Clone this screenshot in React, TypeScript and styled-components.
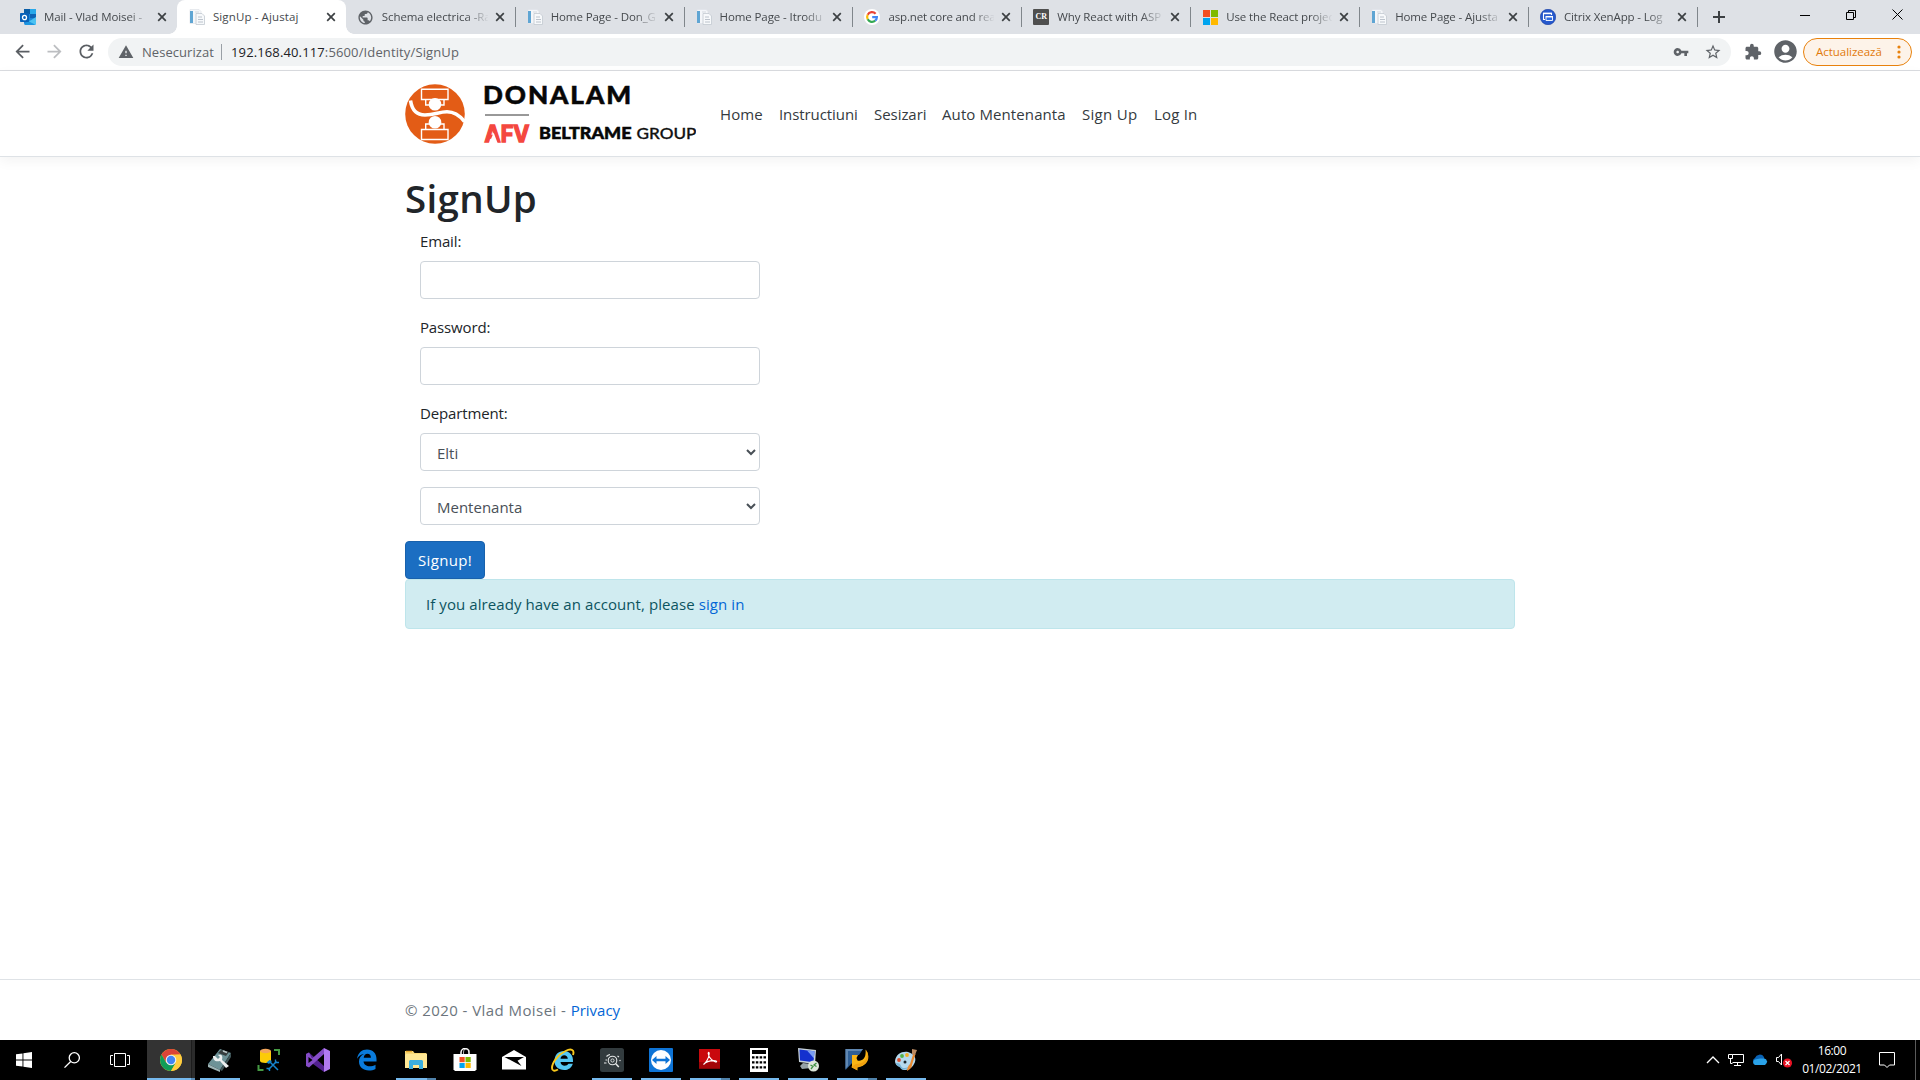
import React from "react";
import styled, { createGlobalStyle } from "styled-components";
import {
  MdArrowBack,
  MdArrowForward,
  MdRefresh,
  MdWarning,
  MdVpnKey,
  MdStarBorder,
  MdExtension,
  MdAccountCircle,
  MdPublic,
} from "react-icons/md";

const GlobalStyle = createGlobalStyle`
  * { box-sizing: border-box; }
  html, body { margin: 0; padding: 0; background: #fff; overflow: hidden; }
  body { font-family: "Segoe UI", "Open Sans", "Noto Sans", sans-serif; font-size: 15px; line-height: 24px; color: #212529; }
  svg { display: block; flex: none; }
`;

const Screen = styled.div`
  width: 1920px;
  height: 1080px;
  display: flex;
  flex-direction: column;
`;

/* ---------- browser chrome ---------- */

const TabStrip = styled.div`
  height: 34px;
  flex: none;
  display: flex;
  padding-left: 8px;
  background: #dee1e6;
`;

const TabBox = styled.div<{ $active?: boolean; $divider?: boolean }>`
  position: relative;
  width: 168.9px;
  height: 34px;
  flex: none;
  display: flex;
  align-items: center;
  padding: 0 6px 0 12px;
  background: ${(p) => (p.$active ? "#fff" : "transparent")};
  border-radius: 8px 8px 0 0;
  ${(p) =>
    p.$active &&
    `
    &::before, &::after {
      content: "";
      position: absolute;
      bottom: 0;
      width: 8px;
      height: 8px;
    }
    &::before { left: -8px; background: radial-gradient(circle at 0 0, transparent 7.5px, #fff 8px); }
    &::after { right: -8px; background: radial-gradient(circle at 100% 0, transparent 7.5px, #fff 8px); }
  `}
  ${(p) =>
    p.$divider &&
    `
    &::after {
      content: "";
      position: absolute;
      right: -1px;
      top: 7px;
      width: 1px;
      height: 20px;
      background: #80868b;
    }
  `}
`;

const TabTitle = styled.span<{ $ls: number; $fade: boolean }>`
  width: 106px;
  flex: none;
  margin-left: 8px;
  overflow: hidden;
  white-space: nowrap;
  font-size: 11.5px;
  line-height: 18px;
  color: #45494d;
  letter-spacing: ${(p) => p.$ls}px;
  ${(p) => p.$fade && "mask-image: linear-gradient(90deg, #000 84px, transparent 107px);"}
`;

const TabClose = styled.svg`
  margin-left: auto;
`;

const NewTab = styled.div`
  width: 44px;
  display: flex;
  align-items: center;
  justify-content: center;
`;

const WindowButtons = styled.div`
  margin-left: auto;
  display: flex;
  height: 29px;
`;

const WindowButton = styled.div`
  width: 46px;
  display: flex;
  align-items: center;
  justify-content: center;
`;

const Toolbar = styled.div`
  height: 37px;
  flex: none;
  display: flex;
  align-items: center;
  padding: 0 8px 1px 12px;
  border-bottom: 1px solid #dadce0;
  color: #5f6368;
`;

const NavIcon = styled.div<{ $dim?: boolean }>`
  width: 20px;
  margin-right: 12px;
  display: flex;
  justify-content: center;
  color: ${(p) => (p.$dim ? "#bcbec1" : "#5a5e63")};
`;

const Omnibox = styled.div`
  width: 1623px;
  height: 28px;
  display: flex;
  align-items: center;
  padding: 0 9px 0 10px;
  border-radius: 14px;
  background: #f1f3f4;
  font-size: 13px;
`;

const Insecure = styled.span`
  margin-left: 8px;
  width: 79px;
  color: #5f6368;
  letter-spacing: 0.05px;
`;

const OmniDivider = styled.span`
  width: 1px;
  height: 16px;
  background: #9aa0a6;
`;

const Url = styled.span`
  margin-left: 9px;
  color: #5f6368;
  letter-spacing: 0.13px;
  b {
    font-weight: 400;
    color: #202124;
  }
`;

const OmniActions = styled.div`
  margin-left: auto;
  display: flex;
  align-items: center;
  gap: 15px;
`;

const ToolbarActions = styled.div`
  margin-left: 13px;
  display: flex;
  align-items: center;
  gap: 10px;
`;

const UpdatePill = styled.div`
  width: 109px;
  height: 28px;
  margin-left: auto;
  padding: 0 10px 0 12px;
  display: flex;
  align-items: center;
  justify-content: space-between;
  border: 1px solid #e8810c;
  border-radius: 14px;
  background: #fdf3e9;
  color: #e27a0b;
  font-size: 11.5px;
  letter-spacing: -0.03px;
`;

/* ---------- web page ---------- */

const Header = styled.header`
  height: 86px;
  flex: none;
  border-bottom: 1px solid #dee2e6;
  box-shadow: 0 4px 12px rgba(0, 0, 0, 0.05);
  background: #fff;
`;

const Container = styled.div`
  width: 1140px;
  margin: 0 auto;
  padding: 0 15px;
`;

const HeaderRow = styled(Container)`
  height: 85px;
  display: flex;
  align-items: center;
`;

const Nav = styled.nav`
  display: flex;
  margin-left: 24px;
`;

const NavLink = styled.a<{ $w: number; $ls: number }>`
  width: ${(p) => p.$w}px;
  white-space: nowrap;
  color: #343a40;
  letter-spacing: ${(p) => p.$ls}px;
`;

const Main = styled(Container).attrs({ as: "main" })`
  flex: 1;
  padding-top: 16px;
`;

const Title = styled.h1`
  margin: 0;
  padding-top: 1px;
  height: 56px;
  font-size: 38.5px;
  font-weight: 600;
  line-height: 48px;
  letter-spacing: 0.3px;
`;

const Fields = styled.div`
  width: 340px;
  margin-left: 15px;
`;

const Field = styled.div`
  margin-bottom: 16px;
`;

const Label = styled.label`
  display: block;
  margin-bottom: 8px;
  height: 24px;
  letter-spacing: -0.15px;
`;

const Input = styled.input`
  display: block;
  width: 100%;
  height: 38px;
  border: 1px solid #ced4da;
  border-radius: 4px;
  background: #fff;
`;

const Select = styled.select`
  display: block;
  width: 100%;
  height: 38px;
  padding: 7px 12px 5px;
  border: 1px solid #ced4da;
  border-radius: 4px;
  background: #fff;
  color: #495057;
  font: inherit;
`;

const Submit = styled.button`
  display: block;
  width: 80px;
  height: 38px;
  padding: 0;
  border: 1px solid #1861ac;
  border-radius: 4px;
  background: #1b6ec2;
  color: #fff;
  font: inherit;
  letter-spacing: 0.3px;
`;

const Alert = styled.div`
  height: 50px;
  padding: 12px 20px;
  border: 1px solid #bee5eb;
  border-radius: 4px;
  background: #d1ecf1;
  color: #0c5460;
  letter-spacing: 0.08px;
`;

const Link = styled.a`
  color: #0366d6;
`;

const Footer = styled.footer`
  height: 61px;
  flex: none;
  border-top: 1px solid #dee2e6;
  line-height: 60px;
  color: #6c757d;
`;

const Copyright = styled.span`
  letter-spacing: 0.43px;
`;

/* ---------- taskbar ---------- */

const Taskbar = styled.div`
  height: 40px;
  flex: none;
  display: flex;
  background: #000;
  color: #fff;
`;

const SystemButton = styled.div<{ $w?: number; $shift?: number }>`
  width: ${(p) => p.$w ?? 48}px;
  padding-right: ${(p) => p.$shift ?? 0}px;
  display: flex;
  align-items: center;
  justify-content: center;
`;

const AppButton = styled.div<{ $state: "idle" | "open" | "stack" | "active" }>`
  position: relative;
  width: 49px;
  height: 40px;
  padding-right: 2px;
  display: flex;
  align-items: center;
  justify-content: center;
  background: ${(p) =>
    p.$state === "active"
      ? "linear-gradient(90deg, #333 44px, #1c1c1c 44px, #1c1c1c 45px, #2b2b2b 45px, #2b2b2b 48px, #000 48px)"
      : "none"};
  &::after {
    content: "";
    position: absolute;
    bottom: 0;
    height: 2px;
    left: ${(p) => (p.$state === "active" ? 0 : 4)}px;
    width: ${(p) => (p.$state === "active" ? 48 : 40)}px;
    background: ${(p) =>
      p.$state === "idle"
        ? "none"
        : p.$state === "open"
          ? "#76b9ed"
          : p.$state === "active"
            ? "linear-gradient(90deg, #76b9ed 44px, #5a8db8 44px)"
            : "linear-gradient(90deg, #76b9ed 31px, #5082aa 31px)"};
  }
`;

const Tray = styled.div`
  margin-left: auto;
  display: flex;
  align-items: center;
`;

const TrayIcons = styled.div`
  display: flex;
  align-items: center;
  gap: 8px;
`;

const Clock = styled.div`
  width: 78px;
  text-align: center;
  font-size: 12px;
  line-height: 18px;
  letter-spacing: -0.4px;
`;

const ShowDesktop = styled.div`
  width: 5px;
  height: 40px;
  border-left: 1px solid #5a5a5a;
`;

/* ---------- favicons ---------- */

const OutlookIcon = () => (
  <svg width="16" height="16" viewBox="0 0 16 16">
    <rect x="4" y="0" width="12" height="15" rx="0.8" fill="#1a86d9" />
    <path d="M4 0h6v5H4z" fill="#0a5ea8" />
    <path d="M10 0h6v5h-6z" fill="#28a8ea" />
    <path d="M10 5h6v4h-6z" fill="#0e64b5" />
    <path d="M4 16h11.500L10 10z" fill="#1c96e0" />
    <path d="M16 8v8l-7-3.500z" fill="#4cc2f1" />
    <rect x="0" y="4" width="9" height="9" rx="0.800" fill="#0b62b8" />
    <ellipse cx="4.500" cy="8.500" rx="2" ry="2.200" fill="none" stroke="#fff" strokeWidth="1.300" />
  </svg>
);

const PageIcon = () => (
  <svg width="16" height="16" viewBox="0 0 16 16">
    <path d="M1 0.500h9l2 2v12H1z" fill="#f4f6f9" stroke="#dfe3e8" strokeWidth="0.700" />
    <rect x="1" y="2" width="3" height="12" fill="#5fa5d3" />
    <path d="M7 4.500h6l2.500 2.500v8.500H7z" fill="#f7f9fb" stroke="#c3c9d1" strokeWidth="0.800" />
    <path d="M9 8h4M9 10.500h5M9 13h5" stroke="#bcc3cc" />
    <path d="M6 3h4" stroke="#d4d9df" />
  </svg>
);

const GoogleIcon = () => (
  <svg width="16" height="16" viewBox="0 0 16 16">
    <circle cx="8" cy="8" r="8" fill="#fff" />
    <g fill="none" strokeWidth="2.200">
      <path d="M11.600 4.700A4.900 4.900 0 0 0 3.700 5.700" stroke="#ea4335" />
      <path d="M3.700 5.700A4.900 4.900 0 0 0 3.700 10.300" stroke="#fbbc05" />
      <path d="M3.700 10.300A4.900 4.900 0 0 0 11.200 11.700" stroke="#34a853" />
      <path d="M11.200 11.700A4.900 4.900 0 0 0 12.900 8.200H8.200" stroke="#4285f4" />
    </g>
  </svg>
);

const CrBadge = styled.span`
  width: 16px;
  height: 16px;
  border-radius: 1px;
  background: #4f4f4f;
  color: #fff;
  font: 700 8px/16px "Liberation Serif", serif;
  text-align: center;
`;

const FourSquares = ({ size }: { size: number }) => (
  <svg width={size} height={size} viewBox="0 0 15 15">
    <path d="M0 0h7v7H0z" fill="#f25022" />
    <path d="M8 0h7v7H8z" fill="#7fba00" />
    <path d="M0 8h7v7H0z" fill="#00a4ef" />
    <path d="M8 8h7v7H8z" fill="#ffb900" />
  </svg>
);

const CitrixIcon = () => (
  <svg width="16" height="16" viewBox="0 0 16 16">
    <circle cx="8" cy="8" r="7.700" fill="#2659cd" stroke="#153b9d" strokeWidth="0.600" />
    <path d="M5 10.500H3.500V4.500h8v1.500" fill="none" stroke="#fff" strokeWidth="1.100" />
    <path d="M3 4.400h9" stroke="#fff" strokeWidth="1.600" />
    <path d="M6 7.500h6.500v4H6z" fill="#2f6bdf" stroke="#fff" strokeWidth="0.900" />
    <path d="M5.600 7.700h7.300" stroke="#fff" strokeWidth="1.500" />
  </svg>
);

type Tab = { title: string; icon: React.ReactNode; ls?: number; fade?: boolean };

const tabs: Tab[] = [
  { title: "Mail - Vlad Moisei -", icon: <OutlookIcon />, fade: true },
  { title: "SignUp - Ajustaj", icon: <PageIcon />, ls: 0.12 },
  { title: "Schema electrica -Ra", icon: <MdPublic size={17} color="#5f6368" />, ls: -0.08, fade: true },
  { title: "Home Page - Don_G", icon: <PageIcon />, fade: true },
  { title: "Home Page - Itrodu", icon: <PageIcon />, fade: true },
  { title: "asp.net core and rea", icon: <GoogleIcon />, ls: -0.15, fade: true },
  { title: "Why React with ASP", icon: <CrBadge>CR</CrBadge>, fade: true },
  { title: "Use the React projec", icon: <FourSquares size={15} />, ls: -0.12, fade: true },
  { title: "Home Page - Ajusta", icon: <PageIcon />, fade: true },
  { title: "Citrix XenApp - Log", icon: <CitrixIcon />, ls: -0.15, fade: true },
];

const IconSlot = styled.span`
  width: 16px;
  display: flex;
  justify-content: center;
`;

/* ---------- site logo ---------- */

const SiteLogo = () => (
  <svg width="291" height="62" viewBox="0 0 291 62">
    <circle cx="30" cy="31" r="29.800" fill="#e35c16" />
    <g fill="none" stroke="#fff" strokeWidth="1.400">
      <path d="M16.500 6.300h26.500v10.200h-26.500zM16.500 46.500h26.500v10h-26.500z" />
      <path d="M20.700 16.500v5.500h4M39 16.500v5.500h-4M20.700 46.500V41h4M39 46.500V41h-4" />
    </g>
    <circle cx="30" cy="21.300" r="6.300" fill="#fff" />
    <circle cx="30" cy="39.300" r="6.300" fill="#fff" />
    <path d="M5.500 17.500C7 27 11 32 20 32C30 32 34 28.800 42 28.800C50 28.800 55 33 59.500 38.500" fill="none" stroke="#fff" strokeWidth="3.600" />
    <text x="78" y="21" fontFamily="Lato" fontWeight="900" fontSize="24.500" letterSpacing="1.800" textLength="150" lengthAdjust="spacingAndGlyphs" fill="#070707" stroke="#070707" strokeWidth="0.500">DONALAM</text>
    <path d="M80 32h44" stroke="#333" strokeWidth="1" />
    <text transform="translate(79.500 59)" fontFamily="Inter" fontWeight="700" fontSize="23" textLength="45" lengthAdjust="spacingAndGlyphs" fill="#f4473f" stroke="#f4473f" strokeWidth="1.400">AFV</text>
    <path d="M84.300 60.500L88.600 49.500L92.800 60.500z" fill="#fff" />
    <text x="134" y="56" fontFamily="Lato" fontWeight="900" fontSize="16" textLength="92.500" lengthAdjust="spacingAndGlyphs" fill="#070707" stroke="#070707" strokeWidth="0.500">BELTRAME</text>
    <text x="231.500" y="56" fontFamily="Lato" fontWeight="500" fontSize="16" textLength="60" lengthAdjust="spacingAndGlyphs" fill="#111" stroke="#111" strokeWidth="0.300">GROUP</text>
  </svg>
);

const navLinks = [
  { text: "Home", w: 59, ls: 0.1 },
  { text: "Instructiuni", w: 95, ls: -0.08 },
  { text: "Sesizari", w: 68, ls: -0.05 },
  { text: "Auto Mentenanta", w: 140, ls: 0.1 },
  { text: "Sign Up", w: 72, ls: 0.3 },
  { text: "Log In", w: 50, ls: 0.2 },
];

/* ---------- taskbar icons ---------- */

const StartIcon = () => (
  <svg width="16" height="16" viewBox="0 0 16 16" fill="#fff">
    <path d="M0 2.300L6.500 1.400V7.500H0zM7.400 1.200L16 0v7.500H7.400zM0 8.500h6.500v6.100L0 13.700zM7.400 8.500H16V16l-8.600-1.200z" />
  </svg>
);
const SearchIcon = () => (
  <svg width="16" height="16" viewBox="0 0 16 16" fill="none" stroke="#fff" strokeWidth="1.300">
    <circle cx="10.300" cy="5.800" r="5.100" />
    <path d="M6.700 9.500L0.500 15.600" />
  </svg>
);
const TaskViewIcon = () => (
  <svg width="20" height="16" viewBox="0 0 20 16" fill="none" stroke="#fff">
    <path d="M4.500 1.500h11v13h-11zM3 3.500H0.500v9H3M17 3.500h2.500v9H17" />
  </svg>
);
const ChromeIcon = () => (
  <svg width="24" height="24" viewBox="0 0 24 24">
    <circle cx="12" cy="12" r="11" fill="#fbc82f" />
    <path d="M2.500 6.500A11 11 0 0 1 21.500 6.500H12L7.200 14.700z" fill="#db4437" />
    <path d="M2.500 6.500A11 11 0 0 0 12 23L16.800 14.700H7.200z" fill="#0f9d58" />
    <path d="M21.500 6.500A11 11 0 0 1 12 23L16.800 14.700L16 7z" fill="#ffcd40" />
    <circle cx="12" cy="12" r="5.300" fill="#f1f1f1" />
    <circle cx="12" cy="12" r="4.200" fill="#4285f4" />
  </svg>
);
const ToolIcon = () => (
  <svg width="26" height="24" viewBox="0 0 26 24">
    <path d="M1 16L13 1l11 4-11 17z" fill="#6d9297" />
    <path d="M1 16l12 6v2L1 19z" fill="#9db4b6" />
    <path d="M13 22L24 5v4L15 23z" fill="#3f5558" />
    <path d="M14 2l8 2-3 4-8-3z" fill="#353d3e" />
    <path d="M16 3l4 1.500" stroke="#bdc8c8" strokeWidth="1.500" />
    <path d="M8 8l3 3 2-2-2-2c4-1 5 1 4 5l7 6-3 2-6-7c-5 1-7-1-7-5z" fill="#edf0f0" />
  </svg>
);
const DatabaseIcon = () => (
  <svg width="24" height="24" viewBox="0 0 24 24">
    <path d="M3 3v10c0 2.500 11 2.500 11 0V3z" fill="#fccb08" />
    <ellipse cx="8.500" cy="3" rx="5.500" ry="2.200" fill="#f3a65b" />
    <path d="M17 2h5v5M1.500 17v5h5" fill="none" stroke="#459a43" strokeWidth="2" />
    <path d="M12 13l9 9M19.500 13.500l-8 8" stroke="#1584cf" strokeWidth="1.500" />
    <path d="M9.500 14.500l3-2.500 2.500 1-3 3z" fill="#1584cf" />
    <path d="M18.500 11.500v3h3.500M9.500 20.500h3v2.500" fill="none" stroke="#1584cf" strokeWidth="1.400" />
  </svg>
);
const StudioIcon = () => (
  <svg width="24" height="24" viewBox="0 0 24 24">
    <path d="M0 6l3-1.500L18 18v6L3 13 0 17z" fill="#52218f" />
    <path d="M0 6v12l3 1.500L18 6V0L6 10.500 3 4.500z" fill="#854cc7" />
    <path d="M2.500 9v6l4-3z" fill="#000" />
    <path d="M12.500 12L18 7.500v9z" fill="#000" />
    <path d="M18 0l6 3v18l-6 3z" fill="#b179f1" />
  </svg>
);
const EdgeIcon = () => (
  <svg width="22" height="22" viewBox="0 0 22 22">
    <path d="M1 9.800C2 3.700 6 0.500 11 0.500C17 0.500 20.500 4.600 20.500 10v2.500H7.500c.3 3.200 3.200 4.700 6 4.700 2.300 0 4.300-.5 6-1.500V20c-2 1-4.300 1.500-6.500 1.500-6 0-10-3.700-10-9C3 9 4.800 6.400 8 5C4.800 5.400 2.600 7.200 1 9.800zM7.700 8.800h7.200c0-2.500-1.300-4-3.500-4-2 0-3.300 1.500-3.700 4z" fill="#0a7bdb" />
  </svg>
);
const FolderIcon = () => (
  <svg width="22" height="20" viewBox="0 0 22 20">
    <path d="M0 1h8l1.500 2H21l1 1v14H0z" fill="#f8d775" />
    <path d="M1 4h21v14H0V5z" fill="#ffe794" />
    <path d="M1 1.500h6" stroke="#e9a92c" strokeWidth="1.500" />
    <path d="M4 19v-8l1-1h12l1 1v8h-4v-4H8v4z" fill="#3bafe0" />
  </svg>
);
const StoreIcon = () => (
  <svg width="24" height="24" viewBox="0 0 24 24">
    <path d="M8 6V4.500a4 4 0 0 1 8 0V6" fill="none" stroke="#fff" strokeWidth="1.500" />
    <path d="M10.500 6V4a3 3 0 0 1 6-.500" fill="none" stroke="#ddd" strokeWidth="0.800" />
    <path d="M0.500 6h23v15.500l-1.500 1.500H2L0.500 21.500z" fill="#fff" />
    <path d="M6.500 9h5.200v5.200H6.500z" fill="#f25022" />
    <path d="M12.500 9h5.200v5.200h-5.200z" fill="#7fba00" />
    <path d="M6.500 15h5.200v5H6.500z" fill="#00a4ef" />
    <path d="M12.500 15h5.200v5h-5.200z" fill="#ffb900" />
  </svg>
);
const MailIcon = () => (
  <svg width="24" height="20" viewBox="0 0 24 20">
    <path d="M0 7L12 0l12 7v12.500H0z" fill="#fff" />
    <path d="M2.500 7h19.500l-6.500 3.800 4 5.200z" fill="#000" />
  </svg>
);
const ExplorerIcon = () => (
  <svg width="24" height="24" viewBox="0 0 24 24">
    <path d="M3.500 13C3.500 6.500 7.500 3 13 3s9.500 4 9 11H9.500c.3 2.500 2 3.700 4.200 3.700 1.700 0 3-.7 3.800-2h4.300c-1.300 4-4.300 6.300-8.500 6.300-6 0-9.800-3.500-9.800-9zM9.500 10.700h7.300c-.2-2.300-1.500-3.500-3.600-3.500s-3.400 1.200-3.700 3.500z" fill="#55c8f3" />
    <path d="M22 7c2-6-2.500-6.500-7.500-4C7 6.500 1 15 1 20c0 3 2.500 3.500 6 1.500" fill="none" stroke="#f8c81c" strokeWidth="1.900" />
  </svg>
);
const InspectIcon = () => (
  <svg width="24" height="24" viewBox="0 0 24 24">
    <rect width="24" height="24" rx="2.500" fill="#323b3e" />
    <g fill="none" stroke="#e7eaea" strokeWidth="1.100">
      <circle cx="12.500" cy="12.500" r="4.300" />
      <path d="M15.800 15.800l3 3.200" strokeWidth="1.500" />
      <path d="M6.500 8.500A7 7 0 0 1 10 6.500M5.500 12h1.500M4 15h2.500M17.500 8l1.500 1" />
    </g>
    <circle cx="12.500" cy="12.500" r="1.600" fill="none" stroke="#e7eaea" strokeWidth="0.900" />
    <circle cx="20" cy="12.500" r="0.700" fill="#e7eaea" />
  </svg>
);
const ViewerIcon = () => (
  <svg width="24" height="24" viewBox="0 0 24 24">
    <rect width="24" height="24" rx="1" fill="#0e74d6" />
    <circle cx="12" cy="12" r="10" fill="#fff" />
    <path d="M3 12l4.500-4v2.800h9V8l4.500 4-4.500 4v-2.800h-9V16z" fill="#0e74d6" />
  </svg>
);
const ReaderIcon = () => (
  <svg width="21" height="23" viewBox="0 0 21 23">
    <rect width="21" height="19.500" fill="#c9090d" />
    <rect y="13" width="21" height="6.500" fill="#a30508" />
    <path d="M4.500 15.500C7 14 10 9 10.200 4.500c0-1.500-1-1.500-1 0C9.500 8 13 12 16.500 13c1.500.3 1.500-1 0-1.200C12 11.300 7 13 4.500 15.500z" fill="none" stroke="#fff" strokeWidth="1.100" />
  </svg>
);
const CalculatorIcon = () => (
  <svg width="18" height="24" viewBox="0 0 18 24">
    <rect width="18" height="24" fill="#fff" />
    <path d="M2 2h14v4H2z" fill="#000" />
    <path d="M2 9.300h14M2 14.300h14M2 19.300h14" stroke="#000" strokeWidth="2.300" strokeDasharray="2.500 1.330" />
  </svg>
);
const RemoteIcon = () => (
  <svg width="24" height="24" viewBox="0 0 24 24">
    <path d="M2 0l18 2-1 14L3 14z" fill="#c7d2d8" />
    <path d="M3.500 1.500l15 1.700-1 11L4 12.500z" fill="#1431ce" />
    <path d="M11 2.500l7.500.7-.6 7z" fill="#799df2" />
    <path d="M7 15l8 1v4l-9 1-2-3z" fill="#96a2a8" />
    <circle cx="17.500" cy="18" r="5.500" fill="#dce5da" />
    <path d="M14.500 17l2.500 1.500-2 2.500M20.500 15l-2.500 2 2.500 1.500" fill="none" stroke="#3d8f40" strokeWidth="1.300" />
  </svg>
);
const ArrowsIcon = () => (
  <svg width="24" height="24" viewBox="0 0 24 24">
    <path d="M0.500 1H18L14 7H8v7l-7.500 8z" fill="#2f5f95" />
    <path d="M0.500 1H18l-2 2H3v15l-2.500 3z" fill="#6088b2" />
    <path d="M7 7h6l-1.500 3 1 2.500c5 1 9-2 8-11 5 6 4 16-8 18v3l-5.500-3z" fill="#fab514" />
    <path d="M21 2c3 8-1 14-10 14l-5 3 6 3v-3c12-2 13-12 9-17z" fill="#f0a010" />
  </svg>
);
const PaintIcon = () => (
  <svg width="24" height="24" viewBox="0 0 24 24">
    <path d="M1 13C2 6 8 3 14 4c7 2 9 7 6 12-2 4-6 6-10 6-3 0-2-3-4-4-3 0-5-2-5-5z" fill="#b5d9ee" />
    <path d="M2 15c4 0 4 1 5 3 1 3 4 2 8 1-3 3-6 3-8 2-1-3-5-2-5-6z" fill="#78b5d8" />
    <circle cx="5" cy="12" r="1.900" fill="#db4d2d" />
    <circle cx="8" cy="8" r="1.900" fill="#54b248" />
    <circle cx="13" cy="7" r="1.900" fill="#f4ad25" />
    <circle cx="11" cy="14" r="1.500" fill="#1a262b" />
    <path d="M13 23c0-3 1-5 3-7l3.500-11 2 1-3.500 11c0 3-3 5-5 6z" fill="#e98a31" />
    <path d="M18 1l5 1-2 5-3-1z" fill="#b98961" />
  </svg>
);

const apps: { icon: React.ReactNode; state: "idle" | "open" | "stack" | "active" }[] = [
  { icon: <ChromeIcon />, state: "active" },
  { icon: <ToolIcon />, state: "open" },
  { icon: <DatabaseIcon />, state: "idle" },
  { icon: <StudioIcon />, state: "idle" },
  { icon: <EdgeIcon />, state: "idle" },
  { icon: <FolderIcon />, state: "stack" },
  { icon: <StoreIcon />, state: "idle" },
  { icon: <MailIcon />, state: "idle" },
  { icon: <ExplorerIcon />, state: "idle" },
  { icon: <InspectIcon />, state: "open" },
  { icon: <ViewerIcon />, state: "open" },
  { icon: <ReaderIcon />, state: "stack" },
  { icon: <CalculatorIcon />, state: "open" },
  { icon: <RemoteIcon />, state: "open" },
  { icon: <ArrowsIcon />, state: "stack" },
  { icon: <PaintIcon />, state: "open" },
];

const Browser = () => (
  <>
    <TabStrip>
      {tabs.map((t, i) => (
        <TabBox key={i} $active={i === 1} $divider={i > 1}>
          <IconSlot>{t.icon}</IconSlot>
          <TabTitle $ls={t.ls ?? -0.1} $fade={!!t.fade}>{t.title}</TabTitle>
          <TabClose width="14" height="10" viewBox="0 0 14 10" stroke="#3c4043" strokeWidth="1.700">
            <path d="M1.200 1.200l7.600 7.600M8.800 1.200L1.200 8.800" />
          </TabClose>
        </TabBox>
      ))}
      <NewTab>
        <svg width="12" height="12" viewBox="0 0 12 12" stroke="#3c4043" strokeWidth="2">
          <path d="M6 0v12M0 6h12" />
        </svg>
      </NewTab>
      <WindowButtons>
        <WindowButton>
          <svg width="10" height="10" viewBox="0 0 10 10" stroke="#000"><path d="M0 5.500h10" /></svg>
        </WindowButton>
        <WindowButton>
          <svg width="10" height="10" viewBox="0 0 10 10" stroke="#000" fill="none"><path d="M0.500 2.500h7v7h-7zM2.500 2.500v-2h7v7h-2" /></svg>
        </WindowButton>
        <WindowButton>
          <svg width="11" height="11" viewBox="0 0 11 11" stroke="#000"><path d="M0.500 0.500l10 10M10.500 0.500l-10 10" /></svg>
        </WindowButton>
      </WindowButtons>
    </TabStrip>
    <Toolbar>
      <NavIcon><MdArrowBack size={21} /></NavIcon>
      <NavIcon $dim><MdArrowForward size={21} /></NavIcon>
      <NavIcon><MdRefresh size={21} /></NavIcon>
      <Omnibox>
        <MdWarning size={16} />
        <Insecure>Nesecurizat</Insecure>
        <OmniDivider />
        <Url><b>192.168.40.117</b>:5600/Identity/SignUp</Url>
        <OmniActions>
          <MdVpnKey size={16} />
          <MdStarBorder size={18} />
        </OmniActions>
      </Omnibox>
      <ToolbarActions>
        <MdExtension size={18} />
        <MdAccountCircle size={27} />
      </ToolbarActions>
      <UpdatePill>
        Actualizează
        <svg width="4" height="14" viewBox="0 0 4 14" fill="#e8810c">
          <circle cx="2" cy="2" r="1.600" /><circle cx="2" cy="7" r="1.600" /><circle cx="2" cy="12" r="1.600" />
        </svg>
      </UpdatePill>
    </Toolbar>
  </>
);

export default function App() {
  return (
    <Screen>
      <GlobalStyle />
      <Browser />
      <Header>
        <HeaderRow>
          <SiteLogo />
          <Nav>
            {navLinks.map((l) => (
              <NavLink key={l.text} $w={l.w} $ls={l.ls}>{l.text}</NavLink>
            ))}
          </Nav>
        </HeaderRow>
      </Header>
      <Main>
        <Title>SignUp</Title>
        <Fields>
          <Field>
            <Label htmlFor="email">Email:</Label>
            <Input id="email" type="email" />
          </Field>
          <Field>
            <Label htmlFor="password">Password:</Label>
            <Input id="password" type="password" />
          </Field>
          <Field>
            <Label htmlFor="department">Department:</Label>
            <Select id="department"><option>Elti</option></Select>
          </Field>
          <Field>
            <Select aria-label="Role"><option>Mentenanta</option></Select>
          </Field>
        </Fields>
        <Submit>Signup!</Submit>
        <Alert>If you already have an account, please <Link>sign in</Link></Alert>
      </Main>
      <Footer>
        <Container><Copyright>© 2020 - Vlad Moisei - </Copyright><Link>Privacy</Link></Container>
      </Footer>
      <Taskbar>
        <SystemButton><StartIcon /></SystemButton>
        <SystemButton><SearchIcon /></SystemButton>
        <SystemButton $w={51} $shift={3}><TaskViewIcon /></SystemButton>
        {apps.map((a, i) => (
          <AppButton key={i} $state={a.state}>{a.icon}</AppButton>
        ))}
        <Tray>
          <TrayIcons>
            <svg width="14" height="8" viewBox="0 0 14 8" fill="none" stroke="#fff" strokeWidth="1.300"><path d="M1 7l6-6 6 6" /></svg>
            <svg width="16" height="14" viewBox="0 0 16 14" fill="none" stroke="#fff">
              <path d="M4.500 1.500h11v8h-11M9.500 9.500v3M6 12.500h7M0.500 1.500h4v4h-4zM2.500 5.500v5h2" />
            </svg>
            <svg width="16" height="12" viewBox="0 0 16 12">
              <path d="M3.500 10.500A3.500 3.500 0 0 1 3 4a5 5 0 0 1 9-1l1 6z" fill="#0a63b5" />
              <path d="M3 11a3 3 0 0 1 0-5.500l5-1 4 0a3.400 3.400 0 0 1 1 6.500z" fill="#2aa2e8" />
            </svg>
            <svg width="17" height="16" viewBox="0 0 17 16">
              <path d="M0.500 5.500h2l3-3.500v11l-3-3.500h-2z" fill="none" stroke="#fff" />
              <circle cx="11.500" cy="11" r="4.600" fill="#e81123" />
              <path d="M9.500 9l4 4M13.500 9l-4 4" stroke="#fff" strokeWidth="1.200" />
            </svg>
          </TrayIcons>
          <Clock>16:00<br />01/02/2021</Clock>
          <SystemButton $w={44} $shift={13}>
            <svg width="16" height="16" viewBox="0 0 16 16" fill="none" stroke="#fff"><path d="M0.500 0.500h15v12.500h-5L8 15.500 5.500 13h-5z" /></svg>
          </SystemButton>
          <ShowDesktop />
        </Tray>
      </Taskbar>
    </Screen>
  );
}
